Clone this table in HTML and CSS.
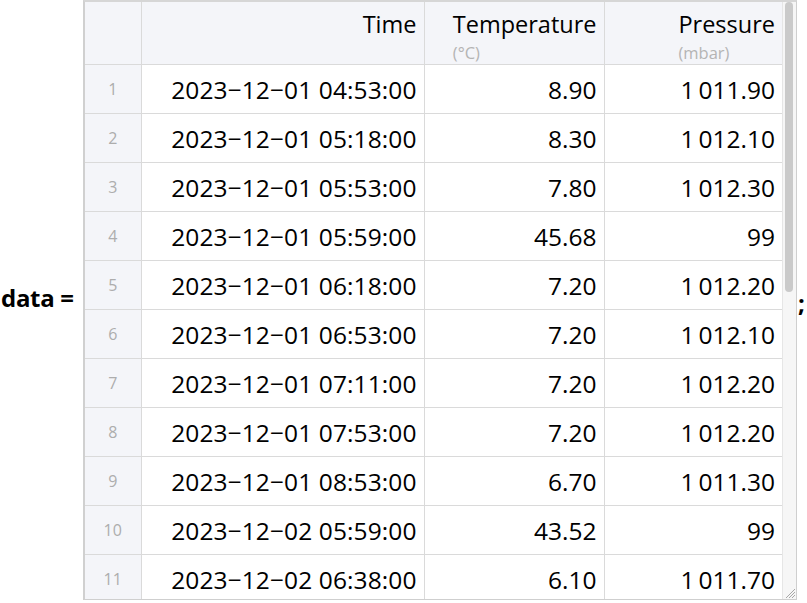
FILE: index.html
```html
<!DOCTYPE html>
<html>
<head>
<meta charset="utf-8">
<link rel="stylesheet" href="styles.css">
</head>
<body>
<div class="expr">
  <span class="lhs">data =</span>
  <div class="frame">
    <div class="viewport">
      <table class="grid">
        <colgroup>
          <col class="c-idx"><col class="c-time"><col class="c-temp"><col class="c-pres">
        </colgroup>
        <thead>
          <tr>
            <th class="corner"></th>
            <th><div class="hd"><span class="name">Time</span></div></th>
            <th><div class="hd"><span class="name">Temperature</span><span class="unit">(°C)</span></div></th>
            <th><div class="hd"><span class="name">Pressure</span><span class="unit">(mbar)</span></div></th>
          </tr>
        </thead>
        <tbody>
          <tr><td class="idx">1</td><td class="dt">2023−12−01 04:53:00</td><td>8.90</td><td>1<span class="ts"></span>011.90</td></tr>
          <tr><td class="idx">2</td><td class="dt">2023−12−01 05:18:00</td><td>8.30</td><td>1<span class="ts"></span>012.10</td></tr>
          <tr><td class="idx">3</td><td class="dt">2023−12−01 05:53:00</td><td>7.80</td><td>1<span class="ts"></span>012.30</td></tr>
          <tr><td class="idx">4</td><td class="dt">2023−12−01 05:59:00</td><td>45.68</td><td>99</td></tr>
          <tr><td class="idx">5</td><td class="dt">2023−12−01 06:18:00</td><td>7.20</td><td>1<span class="ts"></span>012.20</td></tr>
          <tr><td class="idx">6</td><td class="dt">2023−12−01 06:53:00</td><td>7.20</td><td>1<span class="ts"></span>012.10</td></tr>
          <tr><td class="idx">7</td><td class="dt">2023−12−01 07:11:00</td><td>7.20</td><td>1<span class="ts"></span>012.20</td></tr>
          <tr><td class="idx">8</td><td class="dt">2023−12−01 07:53:00</td><td>7.20</td><td>1<span class="ts"></span>012.20</td></tr>
          <tr><td class="idx">9</td><td class="dt">2023−12−01 08:53:00</td><td>6.70</td><td>1<span class="ts"></span>011.30</td></tr>
          <tr><td class="idx">10</td><td class="dt">2023−12−02 05:59:00</td><td>43.52</td><td>99</td></tr>
          <tr><td class="idx">11</td><td class="dt">2023−12−02 06:38:00</td><td>6.10</td><td>1<span class="ts"></span>011.70</td></tr>
        </tbody>
      </table>
    </div>
    <div class="vbar">
      <div class="thumb"></div>
      <svg class="grip" width="12" height="12" viewBox="0 0 12 12">
        <path d="M11 2 L2 11 M11 5 L5 11 M11 8 L8 11" stroke="#a8a8a8" stroke-width="1" fill="none"/>
      </svg>
    </div>
  </div>
  <span class="semi">;</span>
</div>
</body>
</html>
```

FILE: styles.css
```css
html, body {
  margin: 0;
  padding: 0;
  background: #ffffff;
}

.expr {
  display: flex;
  align-items: center;
  height: 600px;
  font-family: "Open Sans", "Noto Sans", sans-serif;
  color: #000;
}

.lhs {
  flex: 0 0 83px;
  box-sizing: border-box;
  padding-left: 1px;
  margin-top: -6px;
  font-weight: bold;
  font-size: 24px;
  letter-spacing: -0.3px;
  white-space: nowrap;
}

.semi {
  font-weight: bold;
  font-size: 24px;
  padding-left: 1px;
  margin-top: 4px;
}

.frame {
  display: flex;
  box-sizing: border-box;
  width: 714px;
  height: 600px;
  border: 1px solid #cfcfcf;
  border-left: 2px solid #d0d0d0;
  border-top: 2px solid #d6d6d6;
  background: #fff;
}

.viewport {
  flex: 1;
  overflow: hidden;
}

.grid {
  border-collapse: collapse;
  table-layout: fixed;
  width: 697px;
  font-size: 24.5px;
}

.c-idx { width: 56px; }
.c-time { width: 283px; }
.c-temp { width: 180px; }
.c-pres { width: 178px; }

.grid th,
.grid td {
  border: 1px solid #dadada;
  padding: 0 7px 0 0;
  text-align: right;
  white-space: nowrap;
}

.grid tr > :first-child { border-left: none; }
.grid tr > :last-child { border-right: none; }
.grid thead th { border-top: none; }

.grid thead th {
  height: 62px;
  background: #f4f5f9;
  font-weight: normal;
  font-size: 23.5px;
  vertical-align: top;
}

.hd {
  display: inline-flex;
  flex-direction: column;
  align-items: flex-start;
  padding-top: 8px;
}

.name {
  line-height: 28px;
}

.unit {
  font-size: 16.5px;
  line-height: 20px;
  margin-top: 5px;
  color: #b4b4b4;
}

.grid td {
  height: 48px;
}

.grid td.dt {
  letter-spacing: 0.1px;
}

.grid td.idx {
  background: #f4f5f9;
  text-align: center;
  padding: 0;
  font-size: 16px;
  color: #adadad;
}

.ts {
  display: inline-block;
  width: 4px;
}

.vbar {
  position: relative;
  flex: 0 0 13px;
  background: #f6f6f6;
  border-left: 1px solid #e6e6e6;
}

.thumb {
  margin: 0 auto 0 2px;
  width: 8px;
  height: 290px;
  border-radius: 4px;
  background: #cacaca;
}

.grip {
  position: absolute;
  right: 0;
  bottom: 0;
}
```
